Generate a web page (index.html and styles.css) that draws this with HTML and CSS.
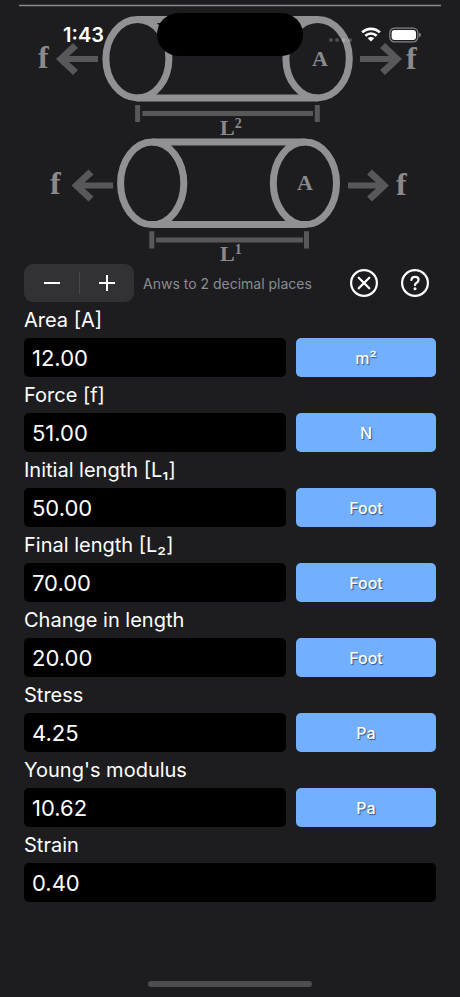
FILE: index.html
```html
<!DOCTYPE html>
<html lang="en">
<head>
<meta charset="utf-8">
<meta name="viewport" content="width=device-width, initial-scale=1">
<title>Young's modulus calculator</title>
<link rel="stylesheet" href="styles.css">
</head>
<body>
<header class="status">
  <time class="status-time">1:43</time>
  <span class="island"></span>
  <span class="status-icons">
    <svg class="dots" width="24" height="6" viewBox="0 0 24 6" aria-hidden="true"><g fill="#fff" fill-opacity=".22"><circle cx="2" cy="3" r="2"/><circle cx="8" cy="3" r="2"/><circle cx="14.500" cy="3" r="2"/><circle cx="21" cy="3" r="2"/></g></svg>
    <svg width="20" height="15" viewBox="0 0 20 15" aria-hidden="true"><g fill="none" stroke="#fff" stroke-width="2.7"><path d="M1.2 5.4a12.6 12.6 0 0 1 17.6 0"/><path d="M4.4 8.8a8 8 0 0 1 11.2 0"/></g><path d="M10 14.6 6.7 11.3a4.7 4.7 0 0 1 6.6 0z" fill="#fff"/></svg>
    <svg width="32" height="16" viewBox="0 0 32 16" aria-hidden="true"><rect x=".8" y="1.2" width="28" height="13.6" rx="4.6" fill="none" stroke="#858588" stroke-width="1.2"/><rect x="2.6" y="3" width="24.4" height="10" rx="3" fill="#fff"/><path d="M30 5.8q2 .6 2 2.2t-2 2.2z" fill="#858588"/></svg>
  </span>
</header>

<main class="screen">
  <svg class="diagram" viewBox="0 0 460 264" role="img" aria-label="Cylinder of area A stretched by force f">
    <path class="rule" d="M19 5.5h422"/>
    <g class="tube">
      <ellipse cx="137.4" cy="58.7" rx="31.5" ry="39.2"/>
      <ellipse cx="317.6" cy="58.7" rx="31.7" ry="39.2"/>
      <path d="M137.4 19.5h180M137.4 97.9h180"/>
      <ellipse cx="152.2" cy="183.3" rx="31.6" ry="41.3"/>
      <ellipse cx="304.9" cy="183.3" rx="31.6" ry="41.3"/>
      <path d="M152.2 142h152.7M152.2 224.6h152.7"/>
    </g>
    <g class="arrow">
      <path d="M56 59 73 43l5 5-9 8h29v6H69l9 8-5 5z"/>
      <path d="M402 59 385 43l-5 5 9 8h-29v6h29l-9 8 5 5z"/>
      <path d="M71.500 185.500l17-16 5 5-9 8h28.500v6H84.500l9 8-5 5z"/>
      <path d="M389 185.500l-17-16-5 5 9 8h-28v6h28l-9 8 5 5z"/>
    </g>
    <g class="measure">
      <path d="M137.600 105v17M142.300 113.500H313M317.300 105v17"/>
      <path d="M151.800 231.300v17.200M156 240h147M306.500 231.300v17.200"/>
    </g>
    <g class="force">
      <text x="38" y="68">f</text>
      <text x="406" y="69">f</text>
      <text x="50" y="194">f</text>
      <text x="396" y="195">f</text>
    </g>
    <g class="mark">
      <text x="312" y="66">A</text>
      <text x="297" y="190">A</text>
      <text x="220" y="135">L<tspan class="power" dy="-7">2</tspan></text>
      <text x="220" y="261">L<tspan class="power" dy="-7">1</tspan></text>
    </g>
  </svg>

  <div class="toolbar">
    <div class="stepper">
      <button type="button" aria-label="Fewer decimal places"><svg width="18" height="18" viewBox="0 0 18 18"><path d="M1 9h16"/></svg></button>
      <button type="button" aria-label="More decimal places"><svg width="18" height="18" viewBox="0 0 18 18"><path d="M1 9h16M9 1v16"/></svg></button>
    </div>
    <span class="hint">Anws to 2 decimal places</span>
    <div class="actions">
      <button type="button" aria-label="Clear"><svg width="30" height="30" viewBox="0 0 30 30"><circle cx="15" cy="15" r="12.900"/><path d="m9.700 9.700 10.600 10.600M20.300 9.700 9.700 20.300"/></svg></button>
      <button type="button" aria-label="Help"><svg width="30" height="30" viewBox="0 0 30 30"><circle cx="15" cy="15" r="12.900"/><path d="M11.400 12c.2-2 1.600-3.200 3.600-3.200 2.100 0 3.600 1.200 3.600 3 0 1.400-.8 2.200-2 3-1.200.7-1.600 1.200-1.600 2.300"/><circle class="dot" cx="15" cy="20.700" r="1.500"/></svg></button>
    </div>
  </div>

  <form class="fields">
    <div class="field"><label for="area">Area [A]</label><input id="area" value="12.00"><button type="button">m²</button></div>
    <div class="field"><label for="force">Force [f]</label><input id="force" value="51.00"><button type="button">N</button></div>
    <div class="field"><label for="initial">Initial length [L₁]</label><input id="initial" value="50.00"><button type="button">Foot</button></div>
    <div class="field"><label for="final">Final length [L₂]</label><input id="final" value="70.00"><button type="button">Foot</button></div>
    <div class="field"><label for="change">Change in length</label><input id="change" value="20.00"><button type="button">Foot</button></div>
    <div class="field"><label for="stress">Stress</label><input id="stress" value="4.25"><button type="button">Pa</button></div>
    <div class="field"><label for="modulus">Young's modulus</label><input id="modulus" value="10.62"><button type="button">Pa</button></div>
    <div class="field"><label for="strain">Strain</label><input class="wide" id="strain" value="0.40"></div>
  </form>
  <div class="home"></div>
</main>
</body>
</html>
```
FILE: styles.css
```css
* { box-sizing: border-box; }

body {
  margin: 0;
  background: #1d1d1f;
  color: #fff;
  font-family: Inter, "Liberation Sans", sans-serif;
}

button {
  margin: 0;
  padding: 0;
  border: 0;
  background: none;
  color: inherit;
  font: inherit;
}

svg { display: block; }

/* Status bar floats over the scrolled content */
.status {
  position: absolute;
  top: 13px;
  left: 0;
  right: 0;
  display: grid;
  grid-template-columns: 1fr 146px 1fr;
  align-items: center;
  height: 43px;
}

.status-time {
  padding-right: 53px;
  text-align: right;
  font-size: 20px;
  font-weight: 600;
}

.island {
  height: 43px;
  border-radius: 22px;
  background: #000;
}

.status-icons {
  display: flex;
  align-items: center;
  gap: 8px;
  padding-left: 26px;
}

.dots { align-self: flex-end; }

.screen {
  display: flex;
  flex-direction: column;
  min-height: 100vh;
}

.diagram {
  width: 100%;
  overflow: visible;
}

.rule { stroke: #8a8a8d; stroke-width: 1.5; }
.tube { fill: none; stroke: #919194; stroke-width: 7; }
.arrow { fill: #58585a; }
.measure { fill: none; stroke: #58585a; stroke-width: 5; }

.force, .mark {
  fill: #8a8a8d;
  font-family: "Liberation Serif", serif;
  font-weight: 700;
}

.force { font-size: 32px; }
.mark { font-size: 22px; }
.power { font-size: 14px; }

.toolbar {
  display: flex;
  align-items: center;
  height: 38px;
  padding: 0 30px 0 24px;
}

.stepper {
  display: flex;
  width: 110px;
  height: 38px;
  border-radius: 9px;
  background: #323236;
}

.stepper button {
  display: flex;
  flex: 1;
  align-items: center;
  justify-content: center;
}

.stepper button + button {
  background: linear-gradient(#48484c, #48484c) left center / 1px 22px no-repeat;
}

.stepper svg { stroke: #fff; stroke-width: 2; }

.hint {
  margin-left: 9px;
  color: #8c8c90;
  font-size: 14px;
  white-space: nowrap;
}

.actions {
  display: flex;
  gap: 21px;
  margin-left: auto;
}

.actions svg {
  fill: none;
  stroke: #fff;
  stroke-width: 2.2;
  stroke-linecap: round;
}

.actions .dot { fill: #fff; stroke: none; }

.fields { padding: 0 24px; }

.field {
  display: grid;
  grid-template-columns: 1fr 140px;
  column-gap: 10px;
}

.field label {
  grid-column: 1 / -1;
  font-size: 20px;
  line-height: 36px;
}

.field input {
  width: 100%;
  height: 39px;
  padding: 0 8px;
  border: 0;
  border-radius: 5px;
  background: #000;
  color: #fff;
  font-family: inherit;
  font-size: 22px;
}

.field .wide { grid-column: 1 / -1; }

.field button {
  height: 39px;
  border-radius: 5px;
  background: #72b0ff;
  font-size: 16px;
  font-weight: 500;
  text-shadow: 1px 1px 1px #33557f;
}

.home {
  width: 164px;
  height: 6px;
  margin: auto auto 10px;
  border-radius: 3px;
  background: #4d4d4f;
}
```
